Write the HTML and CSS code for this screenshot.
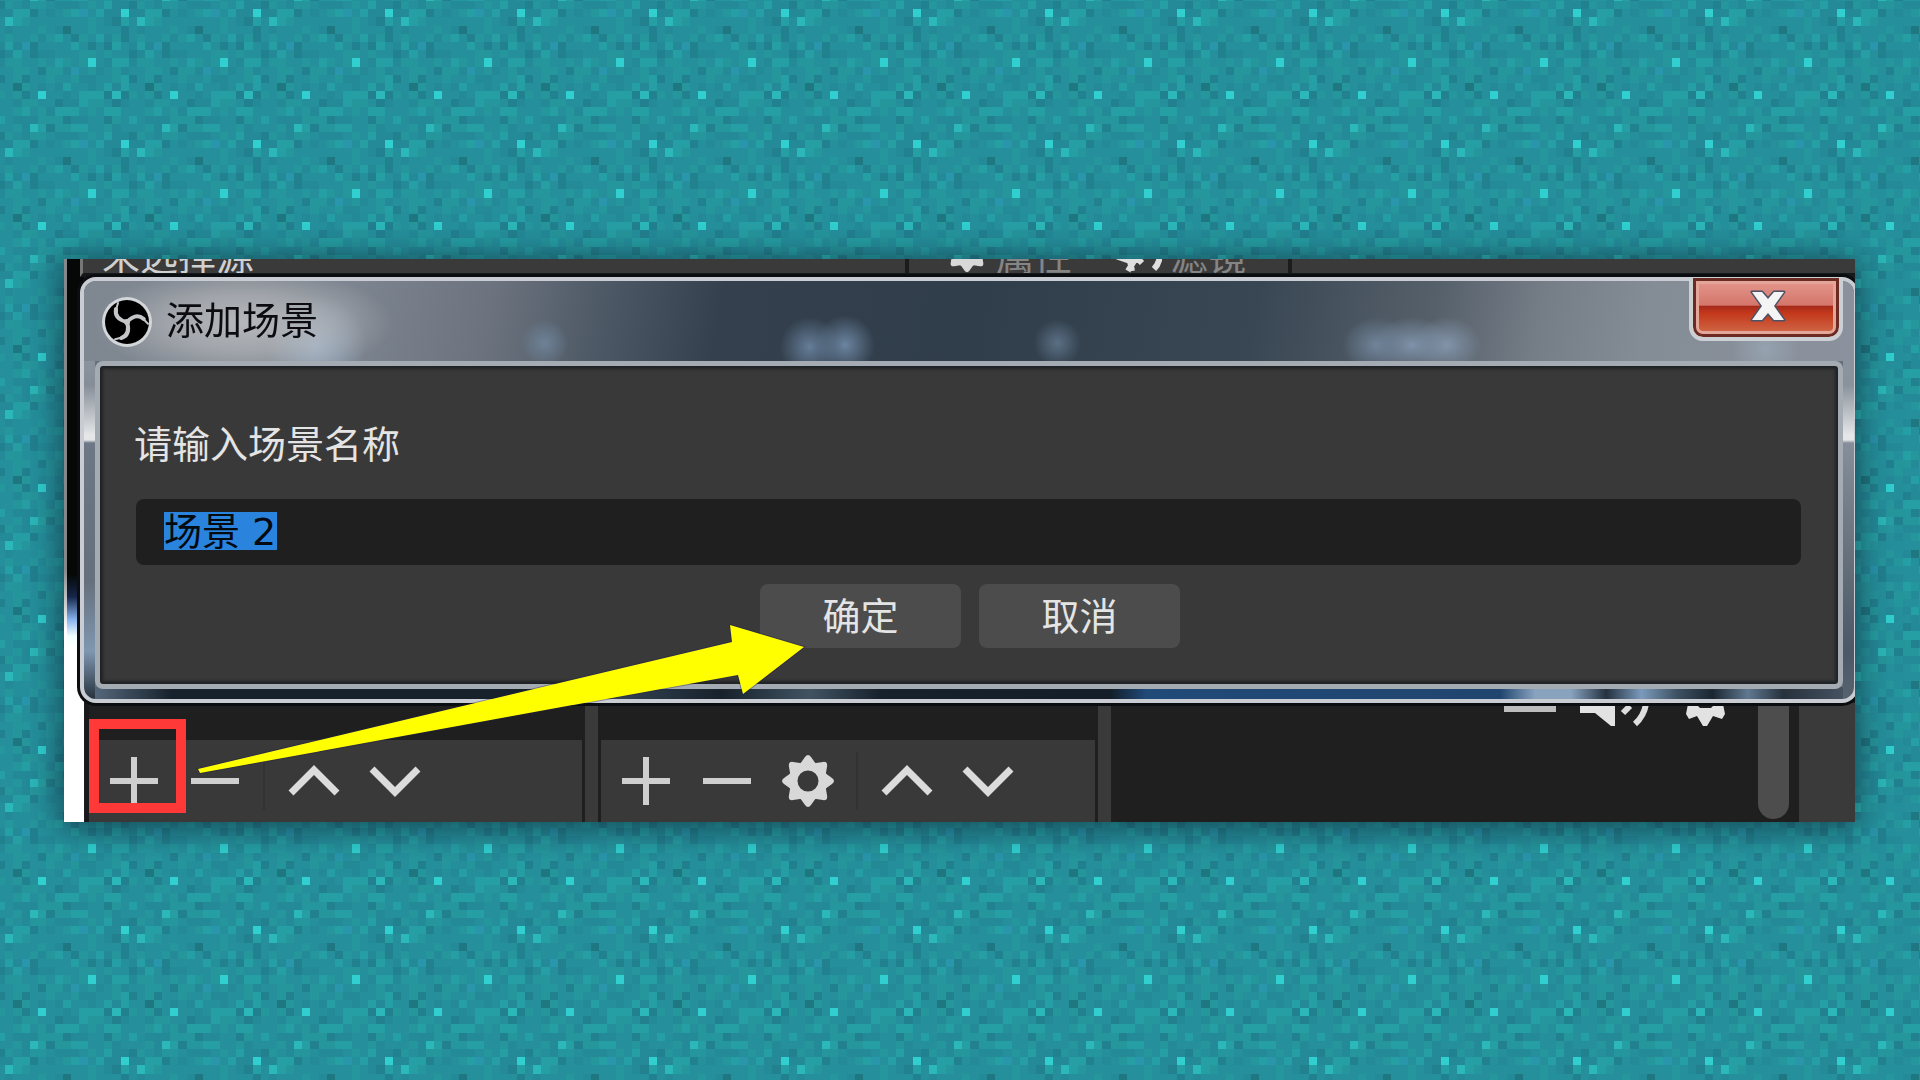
FILE: index.html
```html
<!DOCTYPE html>
<html lang="zh-CN">
<head>
<meta charset="utf-8">
<title>添加场景</title>
<link rel="stylesheet" href="styles.css">
</head>
<body>
<svg class="backdrop" aria-hidden="true">
  <defs><pattern id="mosaic" x="5" y="1" width="132" height="131" patternUnits="userSpaceOnUse"></pattern></defs>
  <rect width="100%" height="100%" fill="url(#mosaic)"/>
</svg>
<svg class="sprites" aria-hidden="true">
  <symbol id="plus" viewBox="0 0 54 54"><path d="M3 27H51M27 3V51" stroke="#cfcfcf" stroke-width="6"/></symbol>
  <symbol id="minus" viewBox="0 0 54 54"><path d="M3 27H51" stroke="#cfcfcf" stroke-width="6"/></symbol>
  <symbol id="up" viewBox="0 0 54 54"><path d="M4 39L27 16L50 39" fill="none" stroke="#dcdcdc" stroke-width="7"/></symbol>
  <symbol id="down" viewBox="0 0 54 54"><path d="M4 15L27 38L50 15" fill="none" stroke="#dcdcdc" stroke-width="7"/></symbol>
  <symbol id="gear" viewBox="-27 -27 54 54">
    <g fill="none" stroke="#d8d8d8">
      <circle r="15" stroke-width="9"/>
      <g fill="#d8d8d8" stroke="none">
        <path id="tooth" d="M-8 -17L-3 -24Q0 -28 3 -24L8 -17ZM-8 17L-3 24Q0 28 3 24L8 17Z"/>
        <use href="#tooth" transform="rotate(45)"/><use href="#tooth" transform="rotate(90)"/><use href="#tooth" transform="rotate(135)"/>
      </g>
    </g>
  </symbol>
</svg>

<main class="shot">
  <div class="status">
    <span class="status-name">未选择源</span>
    <div class="status-tools">
      <svg class="status-icon"><use href="#gear"/></svg>
      <span class="status-text">属性</span>
      <svg class="status-icon filter-icon" viewBox="0 0 46 46"><path d="M0 29L14 34L16 44M8 26L18 34L12 44M16 26L26 36M44 26Q44 36 38 42" fill="none" stroke="#dedede" stroke-width="6"/></svg>
      <span class="status-text">滤镜</span>
    </div>
  </div>

  <section class="dialog" role="dialog" aria-labelledby="dialog-title">
    <header class="titlebar">
      <svg class="logo" viewBox="-26 -26 52 52">
        <circle r="25" fill="#d4d7da"/><circle r="22" fill="#000"/>
        <g fill="none" stroke="#c4c6c8" stroke-linecap="round">
          <g id="blade"><path d="M0 0Q-13 -3 -11 -13" stroke-width="4"/><path d="M-11 -12L-9 -19" stroke-width="2"/></g>
          <use href="#blade" transform="rotate(120)"/><use href="#blade" transform="rotate(240)"/>
        </g>
        <circle r="3" fill="#c4c6c8"/>
      </svg>
      <h1 class="title" id="dialog-title">添加场景</h1>
      <button class="close" type="button" aria-label="关闭">
        <svg class="close-icon" viewBox="0 0 36 32"><path d="M2 2H12L18 9L24 2H34L24 16L34 30H24L18 23L12 30H2L12 16Z" fill="#f4f4f4" stroke="#4b5266" stroke-width="3" stroke-linejoin="round" paint-order="stroke"/></svg>
      </button>
    </header>
    <form class="content">
      <label class="prompt" for="scene-name">请输入场景名称</label>
      <input class="field" id="scene-name" type="text" value="场景 2" autocomplete="off">
      <div class="actions">
        <button class="action" type="button">确定</button>
        <button class="action" type="button">取消</button>
      </div>
    </form>
  </section>

  <div class="docks">
    <div class="dock dock-scenes">
      <div class="toolbar">
        <button class="tool" type="button" aria-label="添加场景"><svg class="icon"><use href="#plus"/></svg></button>
        <button class="tool" type="button" aria-label="移除场景"><svg class="icon"><use href="#minus"/></svg></button>
        <span class="divider"></span>
        <button class="tool" type="button" aria-label="上移"><svg class="icon"><use href="#up"/></svg></button>
        <button class="tool" type="button" aria-label="下移"><svg class="icon"><use href="#down"/></svg></button>
      </div>
    </div>
    <div class="dock dock-sources">
      <div class="toolbar">
        <button class="tool" type="button" aria-label="添加来源"><svg class="icon"><use href="#plus"/></svg></button>
        <button class="tool" type="button" aria-label="移除来源"><svg class="icon"><use href="#minus"/></svg></button>
        <button class="tool" type="button" aria-label="来源属性"><svg class="icon"><use href="#gear"/></svg></button>
        <span class="divider"></span>
        <button class="tool" type="button" aria-label="上移"><svg class="icon"><use href="#up"/></svg></button>
        <button class="tool" type="button" aria-label="下移"><svg class="icon"><use href="#down"/></svg></button>
      </div>
    </div>
    <div class="mixer">
      <svg class="mixer-icons" viewBox="0 0 222 24">
        <path d="M0 5H52" stroke="#bdbdbd" stroke-width="6"/>
        <path d="M76 0H111V22H107L91 9H76Z" fill="#e2e2e2"/>
        <path d="M126 2L119 9M142 0Q140 12 131 20" fill="none" stroke="#dedede" stroke-width="6"/>
        <path d="M184 0H219L221 10L218 15L209 12L203 22H199L193 12L185 15L182 10Z" fill="#e2e2e2"/>
        <path d="M192 0H211L207 4H196Z" fill="#1f1f1f"/>
      </svg>
      <div class="scroll"></div>
    </div>
    <div class="edge"></div>
  </div>

  <svg class="marks" viewBox="0 0 760 563" aria-hidden="true">
    <rect x="30" y="465" width="87" height="84" fill="none" stroke="#ff3838" stroke-width="10"/>
    <path d="M134 510L668 383L666 366L740 388L679 435L674 416L136 514Z" fill="#ff0" stroke="#202050" stroke-opacity=".4" stroke-width="2" paint-order="stroke"/>
  </svg>
</main>
<script src="app.js"></script>
</body>
</html>
```
FILE: styles.css
```css
* { box-sizing: border-box; }

body {
  margin: 0;
  min-height: 100vh;
  padding: 0 65px 0 64px;
  display: flex;
  align-items: center;
  background: #258f9c;
  font-family: "DejaVu Sans", "Noto Sans CJK SC", sans-serif;
  font-size: 38px;
}

.backdrop {
  position: fixed;
  inset: 0;
  z-index: -1;
  width: 100%;
  height: 100%;
}

.sprites { position: absolute; width: 0; height: 0; }

.shot {
  position: relative;
  flex: 1;
  min-width: 0;
  display: flex;
  flex-direction: column;
  overflow: hidden;
  box-shadow: 0 3px 32px 2px rgba(10, 25, 40, .65);
  background:
    linear-gradient(#85888a 0 55%, #fff 66%) left / 3px 100% no-repeat,
    linear-gradient(#050806 0 56%, #16264a 60%, #86b0ee 64%, #f2ffff 67%, #fff 69%) left / 20px 100% no-repeat,
    #1f1f1f;
}

/* Strip of the main window above the dialog */
.status {
  height: 18px;
  margin-left: 16px;
  padding-left: 19px;
  display: flex;
  align-items: flex-end;
  justify-content: space-between;
  overflow: hidden;
  color: #d0d0d0;
  background: #3a3a3a;
  border-left: 3px solid #777;
  border-bottom: 4px solid #16191b;
}

.status-name, .status-text { line-height: 44px; margin-bottom: -6px; white-space: nowrap; }
.status-text { color: #858585; }

.status-tools {
  width: 387px;
  height: 14px;
  margin-right: 563px;
  padding-left: 35px;
  display: flex;
  align-items: flex-end;
  border: solid #1c1c1c;
  border-width: 0 4px;
}

.status-icon { flex: none; width: 46px; height: 46px; margin-right: 6px; }
.filter-icon { margin: 0 8px 0 44px; }

/* Glass window */
.dialog {
  margin: 0 -3px 0 16px;
  padding: 0 11px 10px;
  border: 4px solid #c9cdd3;
  border-radius: 16px;
  position: relative;
  box-shadow: 0 0 0 3px #0b0e10;
  background:
    linear-gradient(#8b939e, #858d98 24px, #e4e6e8 74px, #e4e6e8 79px, #6d7785 82px, #66707c 220px, #7f97b0 290px, #26323e 338px) left 80px / 11px 100% no-repeat,
    linear-gradient(#8b939e, #8a929c 24px, #e4e6e8 74px, #e4e6e8 79px, #858e99 82px, #4c5866 290px, #56636f 338px) right 80px / 11px 100% no-repeat,
    linear-gradient(90deg, #5d7186, #17212c 5%, #17212c 26%, #344352 30%, #17212c 36%, #415362 41%, #17212c 45%, #141e29 58%, #204a78 60%, #20456f 80%, #89a3bf 82%, #89a3bf 84%, #243140 86%, #7b9abb 88%, #3d5163 90%, #1b2631 92%, #5f7890 94%, #26313c 96%, #4b5866) bottom / 100% 12px no-repeat,
    #66707c;
}

.titlebar {
  height: 80px;
  margin: 0 -11px;
  padding: 0 11px 0 17px;
  display: flex;
  align-items: flex-start;
  border-radius: 12px 12px 0 0;
  background:
    radial-gradient(ellipse 150px 56px at 160px 42px, rgba(200, 200, 202, .75), rgba(190, 190, 192, .55) 50%, rgba(180, 182, 186, 0)),
    radial-gradient(circle 50px at 232px 64px, rgba(165, 190, 215, .7), rgba(150, 170, 190, 0)),
    radial-gradient(circle 24px at 26% 62px, #6d8297, rgba(90, 110, 130, 0)),
    radial-gradient(circle 30px at 41% 66px, #657d98, rgba(80, 100, 125, 0)),
    radial-gradient(circle 30px at 43% 64px, #6b84a0, rgba(80, 100, 125, 0)),
    radial-gradient(circle 24px at 55% 62px, #5b7085, rgba(80, 100, 120, 0)),
    radial-gradient(ellipse 34px 28px at 73% 64px, #708399, rgba(100, 120, 140, 0)),
    radial-gradient(ellipse 40px 28px at 75% 64px, #7f92a9, rgba(100, 120, 140, 0)),
    radial-gradient(ellipse 34px 28px at 77% 64px, #8294aa, rgba(110, 130, 150, 0)),
    radial-gradient(circle 34px at 95% 68px, #96a2b0, rgba(140, 150, 162, 0)),
    linear-gradient(100deg, #7f8791, #7d8590 15%, #6c737e 23%, #4a5663 30%, #34404d 36%, #303d4a 50%, #394754 66%, #56606a 76%, #757d87 82%, #848c96 88%, #8b929d);
}

.logo { flex: none; width: 52px; height: 52px; margin-top: 15px; }

.title { flex: 1; margin: 18px 0 0 13px; font-size: 38px; font-weight: 400; line-height: 44px; color: #0c0c10; }

.close {
  width: 154px;
  height: 64px;
  margin-top: -4px;
  padding: 0 0 0 4px;
  border: 4px solid #ccd0d5;
  border-top-width: 1px;
  border-radius: 0 0 14px 14px;
  box-shadow: inset 0 0 0 3px #6b2a22, inset 0 0 0 6px #e5a69a;
  background: linear-gradient(#e69a90, #d4766b 46%, #a52a1a 48%, #c4381b 60%, #cf7350);
}

.close-icon { display: block; width: 36px; height: 32px; margin: 0 auto 3px; }

.content {
  padding: 52px 37px 36px 36px;
  display: flex;
  flex-direction: column;
  border: 5px solid #a5abb2;
  border-radius: 8px;
  color: #e4e4e4;
  background: #393939;
  box-shadow: inset 0 0 3px 3px #202326;
}

.prompt { line-height: 54px; margin: 0 0 27px -2px; }

/* The name is preselected; its highlight is one text line high */
.field {
  width: 100%;
  height: 66px;
  padding: 0 28px 6px;
  border: 0;
  border-radius: 8px;
  outline: 0;
  font: inherit;
  line-height: 38px;
  color: #050a10;
  background: linear-gradient(#2a84de, #2a84de) 28px 13px / 113px 38px no-repeat #1f1f1f;
}

.field::selection { color: #050a10; background: transparent; }

.actions { margin-top: 19px; padding-left: 3px; display: flex; justify-content: center; gap: 18px; }

.action {
  width: 201px;
  height: 64px;
  padding: 0 0 4px;
  border: 0;
  border-radius: 8px;
  font: inherit;
  color: #e4e4e4;
  background: #4c4c4c;
}

/* Docks below the dialog */
.docks { height: 119px; margin-left: 21px; display: flex; border-left: 4px solid #17191a; }

.dock { display: flex; flex: none; align-items: flex-end; border-right: 13px solid #3a3a3a; }
.dock-scenes { width: 509px; padding-right: 3px; }
.dock-sources { width: 513px; padding: 0 3px; }

.toolbar { flex: 1; height: 82px; padding-left: 4px; display: flex; align-items: center; background: #393939; }

.tool { width: 81px; height: 82px; padding: 0; display: flex; align-items: center; justify-content: center; border: 0; background: none; }
.icon { width: 54px; height: 54px; }
.divider { width: 2px; height: 58px; margin: 0 8px; background: #323232; }

.mixer { flex: 1; min-width: 0; display: flex; justify-content: flex-end; align-items: flex-start; }
.mixer-icons { flex: none; width: 222px; height: 24px; margin: 1px 32px 0 0; }
.scroll { flex: none; width: 31px; height: 116px; margin-right: 10px; border-radius: 0 0 16px 16px; background: #4d4d4d; }
.edge { flex: none; width: 56px; background: #3a3a3a; }

/* Annotations drawn over the window */
.marks { position: absolute; left: 0; top: 0; width: 760px; height: 563px; pointer-events: none; }
```
FILE: app.js
```js
const shades = {
  b: '#25909c', g: '#26969d', d: '#248a98', l: '#269fa4',
  D: '#22818f', E: '#1f7782', u: '#2996ab', B: '#2cb7b8', C: '#31cfd0'
};

const tile = [
  'gbdggbdddbgblddD',
  'dllDbdbglublddCd',
  'BlgbbbbbbbgbdDlb',
  'dbbbgbdEbbgbbbDb',
  'gbbgdglbDgbldgDb',
  'lduDbbbblbDbDlbd',
  'dlbDddbbbggbgbbD',
  'ggbbgblgbgCbdlld',
  'bggbDggdubgdbgdb',
  'bgDbbgbbgddbbglD',
  'bEgbdbdlbbdbldlb',
  'bgDbCbbdblllDBDg',
  'bdggbbDddlggbDdb',
  'bglbgdlllbgbllbb',
  'bdddgggDddbbDgbl',
  'bgdBlDggllbbgdbb'
];

const pattern = document.getElementById('mosaic');
tile.forEach((row, y) => [...row].forEach((key, x) => {
  const left = Math.round(x * 132 / 16);
  const top = Math.round(y * 131 / 16);
  const cell = document.createElementNS('http://www.w3.org/2000/svg', 'rect');
  cell.setAttribute('x', left);
  cell.setAttribute('y', top);
  cell.setAttribute('width', Math.round((x + 1) * 132 / 16) - left);
  cell.setAttribute('height', Math.round((y + 1) * 131 / 16) - top);
  cell.setAttribute('fill', shades[key]);
  pattern.append(cell);
}));

const field = document.getElementById('scene-name');
field.focus();
field.select();
```
